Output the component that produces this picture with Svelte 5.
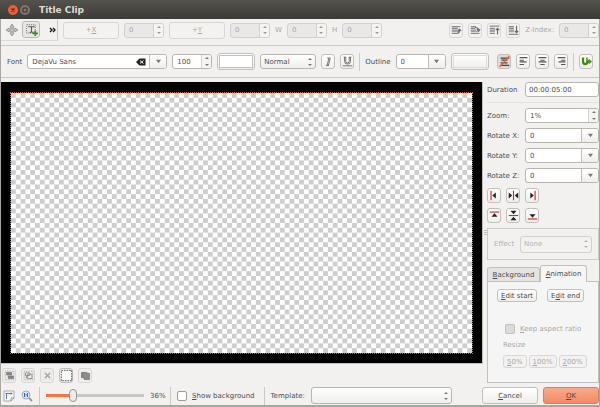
<script>
let font = $state('DejaVu Sans');
let zoom = $state(36);
let keepAspect = $state(false);
let showBackground = $state(false);
let tab = $state('animation');
let duration = $state('00:00:05:00');
let style = $state('Normal');
let outline = $state('0');
let rotations = $state([
    { axis: 'X', value: '0' },
    { axis: 'Y', value: '0' },
    { axis: 'Z', value: '0' }
]);
// position of the handle along the track
let filled = $derived(Math.round(zoom * 0.72));

const hAligns = [
    { label: 'Align left', lines: 'M3.500 2v11', arrows: 'M5 7.500l4-3.500v7z' },
    { label: 'Center horizontally', lines: 'M7.500 2v11', arrows: 'M2 4l4 3.500-4 3.500zM13 4l-4 3.500 4 3.500z' },
    { label: 'Align right', lines: 'M10.500 2v11', arrows: 'M5 4l4 3.500-4 3.500z' }
];
const vAligns = [
    { label: 'Align top', lines: 'M2 3.500h11', arrows: 'M7.500 5l3.500 4h-7z' },
    { label: 'Center vertically', lines: 'M2 7.500h11', arrows: 'M4 2h7l-3.500 4zM7.500 9l3.500 4h-7z' },
    { label: 'Align bottom', lines: 'M2 11.500h11', arrows: 'M4 6h7l-3.500 4z' }
];
const orders = [
    { label: 'Raise', path: 'M2 3h10M2 5h7M2 7h7M2 9h9M2 11h6', arrow: 'M8 11q3 0 3-4M9 8l2-2 2 2' },
    { label: 'Lower', path: 'M2 3h6M2 5h5M2 7h6M2 9h10M2 11h10', arrow: 'M7 4q4 0 4 3M9 6l2 2 2-2' },
    { label: 'Raise to top', path: 'M2 2.500h11M2 5h6M2 7h6M2 9h6M2 11h6', arrow: 'M11 12v-7M9 7l2-2 2 2' },
    { label: 'Lower to bottom', path: 'M2 3h6M2 5h6M2 7h6M2 9h6M2 12h11', arrow: 'M11 2v7M9 8l2 2 2-2' }
];
const textAligns = [
    { label: 'Left', path: 'M3 3h9M3 6h5M3 8h8M3 11h5' },
    { label: 'Center', path: 'M3 3h9M5 6h5M3 8h9M5 11h5' },
    { label: 'Right', path: 'M3 3h9M7 6h5M4 8h8M7 11h5' }
];
</script>

{#snippet spin(label, value, disabled)}
<span class="spin" class:off={disabled}>
    <input type="text" aria-label={label} {value} {disabled}>
    <span class="steps">
        <button type="button" aria-label="Increase {label}" {disabled}><svg viewBox="0 0 6 4"><path d="M1 3l2-2 2 2z"/></svg></button>
        <button type="button" aria-label="Decrease {label}" {disabled}><svg viewBox="0 0 6 4"><path d="M1 1l2 2 2-2z"/></svg></button>
    </span>
</span>
{/snippet}

{#snippet arrow(label)}
<button type="button" class="drop" aria-label={label}><svg viewBox="0 0 8 6"><path d="M1 1h6l-3 4z"/></svg></button>
{/snippet}

{#snippet updown()}
<svg class="updown" viewBox="0 0 6 12"><path d="M1 4l2-2 2 2zM1 8l2 2 2-2z"/></svg>
{/snippet}

{#snippet aligners(list)}
<div class="aligners">
    {#each list as item}
    <button type="button" class="tool" aria-label={item.label}>
        <svg viewBox="0 0 15 15"><path d={item.arrows} fill="#222"/><path d={item.lines} stroke="#d8242a" stroke-width="1.300"/></svg>
    </button>
    {/each}
</div>
{/snippet}

<div class="window">
    <header>
        <button type="button" class="ctl close" aria-label="Close"><svg viewBox="0 0 10 10"><path d="M3.500 3.500l3 3M6.500 3.500l-3 3" stroke="#5c2414" stroke-width="1.300"/></svg></button>
        <button type="button" class="ctl" aria-label="Maximize"><svg viewBox="0 0 10 10"><path d="M3 3h4v4h-4z" fill="none" stroke="#34332e"/></svg></button>
        <h1>Title Clip</h1>
    </header>

    <div class="bar position">
        <div class="modes">
            <button type="button" class="flat" aria-label="Move">
                <svg viewBox="0 0 12 12"><path d="M6 0l2 3h-1v2h2v-1l3 2-3 2v-1h-2v2h1l-2 3-2-3h1v-2h-2v1l-3-2 3-2v1h2v-2h-1z" fill="#c4c4c4" stroke="#777" stroke-width=".6"/></svg>
            </button>
            <button type="button" class="tool text-tool" aria-label="Add text">
                <svg viewBox="0 0 12 12"><path d="M1.500 1.500h8v8h-8z" fill="none" stroke="#888" stroke-dasharray="1 1"/><path d="M3 3.500h6M6 3.500v5M4 8.500h4" stroke="#555" fill="none"/><path d="M9.500 7v5M7 9.500h5" stroke="#2a9a20" stroke-width="1.600"/></svg>
            </button>
            <button type="button" class="more" aria-label="More tools"><svg viewBox="0 0 6 6"><path d="M.5 1l2 2-2 2M3.500 1l2 2-2 2" fill="none" stroke="#111" stroke-width="1.300"/></svg></button>
        </div>
        <button type="button" class="axis" disabled><span>+<u>X</u></span></button>
        {@render spin('X', '0', true)}
        <button type="button" class="axis" disabled><span>+<u>Y</u></span></button>
        {@render spin('Y', '0', true)}
        <span class="dim">W</span>
        {@render spin('W', '0', true)}
        <span class="dim">H</span>
        {@render spin('H', '0', true)}
        <div class="order">
            {#each orders as item}
            <button type="button" class="tool" disabled aria-label={item.label}>
                <svg viewBox="0 0 15 15"><path d={item.path} stroke="#8a8a8a" stroke-width="1.300"/><path d={item.arrow} fill="none" stroke="#666" stroke-width="1.300"/></svg>
            </button>
            {/each}
            <span class="dim">Z-Index:</span>
            {@render spin('Z-Index', '0', true)}
        </div>
    </div>

    <div class="bar fonts">
        <label for="font">Font</label>
        <span class="combo font">
            <input id="font" type="text" bind:value={font}>
            <button type="button" class="clear" aria-label="Clear font" onclick={() => font = ''}>
                <svg viewBox="0 0 10 8"><path d="M0 4l3.500-3.500h6v7h-6z" fill="#222"/><path d="M4 2.500l3.500 3M7.500 2.500l-3.500 3" stroke="#fff"/></svg>
            </button>
            {@render arrow('Choose font')}
        </span>
        {@render spin('Font size', '100', false)}
        <button type="button" class="swatch white" aria-label="Font color"><span></span></button>
        <span class="select weight">
            <select aria-label="Font weight" bind:value={style}>
                <option>Normal</option>
                <option>Bold</option>
            </select>
            {@render updown()}
        </span>
        <button type="button" class="tool" aria-label="Italic">
            <svg viewBox="0 0 15 15"><path d="M6 3.500h3.500M4.500 12h3.500M8 3.500l-2 8.500M9.500 3.500l-2 8.500" fill="none" stroke="#555" stroke-width=".9"/></svg>
        </button>
        <button type="button" class="tool" aria-label="Underline">
            <svg viewBox="0 0 15 15"><path d="M3 2.500h3M9 2.500h3M4 2.500v5q0 3 3.500 3t3.500-3v-5M5.500 2.500v5q0 1.500 2 1.500t2-1.500v-5M2 12.500h11" fill="none" stroke="#555" stroke-width=".9"/></svg>
        </button>
        <span class="rule"></span>
        <label for="outline">Outline</label>
        <span class="combo outline">
            <input id="outline" type="text" bind:value={outline}>
            {@render arrow('Outline width')}
        </span>
        <button type="button" class="swatch" aria-label="Outline color"><span></span></button>
        <div class="aligns">
            <button type="button" class="tool pressed" aria-label="No alignment">
                <svg viewBox="0 0 15 15"><path d="M3 3.500h10M4 6h7M3 9h8M3 12h10" stroke="#444" stroke-width="1.400"/><path d="M2 13.500l11-12" stroke="#e4623a" stroke-width="1.800"/></svg>
            </button>
            {#each textAligns as item}
            <button type="button" class="tool" aria-label={item.label}>
                <svg viewBox="0 0 15 15"><path d={item.path} stroke="#555" stroke-width="1.300"/></svg>
            </button>
            {/each}
            <span class="rule"></span>
            <button type="button" class="tool" aria-label="Insert unicode character">
                <svg viewBox="0 0 15 15"><path d="M3.500 3v4.500q0 3 2.500 3t2.500-3h3" fill="none" stroke="#3f8a12" stroke-width="2.600"/><path d="M8 3v4" stroke="#59a526" stroke-width="2"/><path d="M10 4l4 3.500-4 3.500z" fill="#4b9a18"/></svg>
            </button>
        </div>
    </div>

    <div class="main">
        <section class="left">
            <div class="stage">
                <svg class="scene" viewBox="0 0 48 27" preserveAspectRatio="none" role="img" aria-label="Title preview">
                    <defs>
                        <pattern id="checks" width="1" height="1" patternUnits="userSpaceOnUse">
                            <path d="M0 0h1v1h-1z" fill="#fff"/>
                            <path d="M0 0h.5v.5h-.5zM.5 .5h.5v.5h-.5z" fill="#cdcdcd"/>
                        </pattern>
                    </defs>
                    <rect width="48" height="27" fill="url(#checks)"/>
                </svg>
            </div>
            <div class="select-tools">
                <button type="button" class="tool faded" aria-label="Select all">
                    <svg viewBox="0 0 15 15"><path d="M2.500 2.500h10v10h-10z" fill="none" stroke="#999" stroke-dasharray="1 1"/><path d="M4 4h6v3h-6zM6 8h6v3h-6z" fill="#888" stroke="#666" stroke-width=".6"/></svg>
                </button>
                <button type="button" class="tool faded" aria-label="Select texts">
                    <svg viewBox="0 0 15 15"><path d="M2.500 2.500h10v10h-10z" fill="none" stroke="#999" stroke-dasharray="1 1"/><path d="M4 4.500h5v3h-5zM6.500 6h5v5h-5zM5 8v3" fill="none" stroke="#888"/></svg>
                </button>
                <button type="button" class="tool faded" aria-label="Deselect">
                    <svg viewBox="0 0 15 15"><path d="M2.500 2.500h10v10h-10z" fill="none" stroke="#ddd" stroke-dasharray="1 1"/><path d="M4.500 4.500l6 6M10.500 4.500l-6 6" stroke="#aaa" stroke-width="1.800"/></svg>
                </button>
                <button type="button" class="tool" aria-label="Select rectangles">
                    <svg viewBox="0 0 15 15"><path d="M1.500 1.500h12v12h-12z" fill="#f8fbf8" stroke="#444" stroke-dasharray="2 1"/></svg>
                </button>
                <button type="button" class="tool faded" aria-label="Select images">
                    <svg viewBox="0 0 15 15"><path d="M3 4h6v1h3v7h-6v-2h-3z" fill="#888" stroke="#777"/><circle cx="9" cy="8" r="3" fill="#8e8e8e"/></svg>
                </button>
            </div>
        </section>

        <div class="splitter"><svg viewBox="0 0 4 6"><path d="M1 .5h3M1 2.500h3M1 4.500h3" stroke="#c3bfba"/></svg></div>

        <aside>
            <div class="field duration">
                <label for="duration">Duration</label>
                <input id="duration" class="box" type="text" bind:value={duration}>
            </div>
            <div class="field">
                <span>Zoom:</span>
                {@render spin('Zoom', '1%', false)}
            </div>
            {#each rotations as r}
            <div class="field">
                <label for="rotate-{r.axis}">Rotate {r.axis}:</label>
                <span class="combo">
                    <input id="rotate-{r.axis}" type="text" bind:value={r.value}>
                    {@render arrow('Rotate ' + r.axis + ' slider')}
                </span>
            </div>
            {/each}
            {@render aligners(hAligns)}
            {@render aligners(vAligns)}
            <div class="effect">
                <label for="effect">Effect</label>
                <span class="select off">
                    <select id="effect" disabled><option>None</option></select>
                    {@render updown()}
                </span>
            </div>
            <div class="tabs" role="tablist">
                <button type="button" role="tab" aria-selected={tab == 'background'} class:active={tab == 'background'} onclick={() => tab = 'background'}><span><u>B</u>ackground</span></button>
                <button type="button" role="tab" aria-selected={tab == 'animation'} class:active={tab == 'animation'} onclick={() => tab = 'animation'}><span><u>A</u>nimation</span></button>
            </div>
            <div class="pane">
                {#if tab == 'animation'}
                <div class="edits">
                    <button type="button" class="small"><span><u>E</u>dit start</span></button>
                    <button type="button" class="small"><span>E<u>d</u>it end</span></button>
                </div>
                <label class="check off"><input type="checkbox" disabled bind:checked={keepAspect}><span><u>K</u>eep aspect ratio</span></label>
                <div class="resize">Resize</div>
                <div class="sizes">
                    <button type="button" class="small" disabled><span><u>5</u>0%</span></button>
                    <button type="button" class="small" disabled><span><u>1</u>00%</span></button>
                    <button type="button" class="small" disabled><span><u>2</u>00%</span></button>
                </div>
                {/if}
            </div>
        </aside>
    </div>

    <footer>
        <button type="button" class="flat" aria-label="Fit zoom">
            <svg viewBox="0 0 12 12"><path d="M1 1h10v7l-3 3h-7z" fill="#fbfbfb" stroke="#999" stroke-width=".8"/><path d="M8 11v-3h3" fill="none" stroke="#888" stroke-width=".8"/><path d="M3.500 3v6M2.500 4l1-1 1 1M4 3.500h5M8 2.500l1 1-1 1" fill="none" stroke="#3a6fb5" stroke-width=".9"/></svg>
        </button>
        <button type="button" class="flat" aria-label="Original size">
            <svg viewBox="0 0 12 12"><circle cx="5" cy="5" r="4" fill="#dde8f5" stroke="#9aabc0"/><path d="M8 8l3 3" stroke="#999" stroke-width="1.800"/><path d="M3.500 3v4M6.500 3v4M5 4v.8M5 5.500v.8" stroke="#3465a4"/></svg>
        </button>
        <span class="rule"></span>
        <input class="slider" type="range" min="0" max="100" aria-label="Zoom level" value={filled} oninput={(e) => zoom = Math.round(e.currentTarget.value / 0.72)} style="--filled: {filled}%">
        <span class="percent">{zoom}%</span>
        <span class="rule"></span>
        <label class="check"><input type="checkbox" bind:checked={showBackground}><span><u>S</u>how background</span></label>
        <span class="rule"></span>
        <label for="template">Template:</label>
        <span class="select template">
            <select id="template"><option></option></select>
            {@render updown()}
        </span>
        <div class="actions">
            <button type="button" class="push"><span><u>C</u>ancel</span></button>
            <button type="button" class="push ok"><span><u>O</u>K</span></button>
        </div>
    </footer>
</div>

<style>
:global(body){
    margin: 0;
    background: #3c3b37;
}
*{
    box-sizing: border-box;
}
.window{
    min-height: 100vh;
    display: flex;
    flex-direction: column;
    font: 7px/10px "DejaVu Sans", sans-serif;
    color: #4c4c4c;
    background: #f2f1f0;
    border: 1px solid #a9a59f;
    border-top: 0;
    border-bottom-width: 2px;
}
button, input, select{
    font: inherit;
    color: inherit;
    margin: 0;
    padding: 0;
    min-width: 0;
}
button{
    display: flex;
    align-items: center;
    justify-content: center;
    border: 1px solid #c3bfba;
    border-radius: 3px;
    background: linear-gradient(#fff, #efeeed);
}
button:disabled{
    color: #aaa7a3;
    border-color: #d9d6d3;
    background: #f3f2f1;
}
svg{
    display: block;
}
header{
    height: 19px;
    margin: 0 -1px;
    padding-left: 8px;
    display: flex;
    align-items: center;
    gap: 2px;
    background: linear-gradient(#53524c, #3c3b37);
}
h1{
    margin: 0 0 0 7px;
    font: bold 9px/12px "DejaVu Sans", sans-serif;
    color: #dfdbd2;
}
.ctl{
    width: 10px;
    height: 10px;
    border: 0;
    border-radius: 50%;
    background: #7a776d;
}
.ctl svg{
    width: 10px;
    height: 10px;
}
.close{
    background: #ec5f35;
}
.bar{
    display: flex;
    align-items: center;
    gap: 5px;
    border-bottom: 1px solid #cdc9c5;
}
.position{
    height: 27px;
    padding-bottom: 4px;
}
.modes{
    display: flex;
    align-items: center;
    width: 57px;
    height: 22px;
    padding: 0 1px 0 5px;
    gap: 4px;
    border-right: 1px solid #cdc9c5;
    border-bottom: 1px solid #dcd9d6;
}
.flat, .more{
    border: 0;
    background: none;
}
.flat svg{
    width: 12px;
    height: 12px;
}
.more{
    margin-left: auto;
}
.more svg{
    width: 7px;
    height: 6px;
}
.tool{
    width: 14px;
    height: 15px;
    flex: none;
}
.tool svg{
    width: 13px;
    height: 13px;
    flex: none;
}
.text-tool{
    width: 18px;
    height: 17px;
    border-color: #bbb7b2;
    background: #e9e7e5;
}
.pressed{
    background: #dddad7;
}
.axis{
    width: 56px;
    height: 17px;
}
.spin, .combo{
    display: flex;
    width: 40px;
    height: 15px;
    border: 1px solid #b9b5b0;
    border-radius: 3px;
    background: #fff;
    overflow: hidden;
}
.spin input, .combo input{
    flex: 1;
    width: 0;
    padding-left: 4px;
    border: 0;
    background: none;
}
.spin.off{
    color: #aaa7a3;
    border-color: #d3d0cd;
    background: #e9e8e7;
}
.steps{
    width: 10px;
    display: flex;
    flex-direction: column;
    border-left: 1px solid #d3d0cd;
    background: #f5f4f3;
}
.steps button{
    flex: 1;
    border: 0;
    border-radius: 0;
    background: none;
}
.steps svg{
    width: 6px;
    height: 4px;
    fill: #777;
}
.off .steps svg{
    fill: #999;
}
.dim{
    color: #aaa7a3;
}
.order, .aligns{
    display: flex;
    align-items: center;
    gap: 5px;
    margin-left: auto;
}
.fonts{
    height: 32px;
    padding: 0 6px;
}
.combo.font{
    width: 140px;
}
.combo.outline{
    width: 50px;
}
.drop{
    width: 17px;
    border-width: 0 0 0 1px;
    border-radius: 0;
}
.drop svg{
    width: 7px;
    height: 5px;
    fill: #777;
}
.clear{
    width: 16px;
    border: 0;
    background: none;
}
.clear svg{
    width: 10px;
    height: 8px;
}
.swatch{
    width: 38px;
    height: 17px;
    padding: 1px;
}
.swatch span{
    width: 100%;
    height: 100%;
    border: 1px solid #dddad7;
}
.swatch.white span{
    background: #fff;
    border-color: #c3bfba;
}
.select{
    display: grid;
    align-items: center;
    height: 15px;
}
.select select{
    grid-area: 1 / 1;
    width: 100%;
    height: 100%;
    padding-left: 3px;
    appearance: none;
    border: 1px solid #b9b5b0;
    border-radius: 3px;
    background: linear-gradient(#fff, #efeeed);
}
.updown{
    grid-area: 1 / 1;
    justify-self: end;
    width: 6px;
    height: 12px;
    margin-right: 3px;
    fill: #777;
    pointer-events: none;
}
.weight{
    width: 56px;
}
.select.off select{
    opacity: 1;
    color: #b5b2ae;
    border-color: #d3d0cd;
    background: #f3f2f1;
}
.select.off .updown{
    fill: #b5b2ae;
}
.rule{
    width: 1px;
    height: 18px;
    background: #cdc9c5;
}
.main{
    flex: 1;
    display: flex;
    padding-top: 4px;
}
.left{
    flex: 1;
    display: flex;
    flex-direction: column;
}
.stage{
    flex: 1;
    display: grid;
    padding: 10px 9px 9px;
    background: #000;
    border-bottom: 1px solid #c3bfba;
    border-right: 1px solid #c3bfba;
}
.scene{
    width: 100%;
    height: 100%;
    min-height: 0;
    border: 1px dotted #e05a3a;
    contain: size;
}
.select-tools{
    display: flex;
    gap: 5px;
    padding: 4px 1px 0;
}
.splitter{
    width: 4px;
    display: flex;
    align-items: center;
}
.splitter svg{
    width: 4px;
    height: 6px;
}
.faded{
    border-color: #d9d6d3;
    background: #f0efee;
}
aside{
    width: 112px;
    display: flex;
    flex-direction: column;
    gap: 5px;
}
.field{
    display: grid;
    grid-template-columns: 38px 1fr;
    align-items: center;
}
.field .spin, .field .combo{
    width: 100%;
}
.duration{
    padding-bottom: 5px;
    border-bottom: 1px solid #e4e2e0;
}
.box{
    height: 15px;
    padding-left: 3px;
    border: 1px solid #b9b5b0;
    border-radius: 3px;
    background: #fff;
}
.aligners{
    display: flex;
    gap: 5px;
}
.effect{
    display: grid;
    grid-template-columns: 26px 1fr;
    align-items: center;
    padding: 6px;
    height: 32px;
    border: 1px solid #cdc9c5;
    color: #b5b2ae;
}
.effect .select{
    height: 17px;
}
.tabs{
    display: flex;
    align-items: end;
}
.tabs button{
    width: 53px;
    height: 14px;
    border-radius: 3px 3px 0 0;
    border-bottom: 0;
    background: #e6e4e2;
}
.tabs .active{
    width: 47px;
    height: 17px;
    margin-bottom: -1px;
    background: #f6f5f5;
    z-index: 1;
}
.pane{
    flex: 1;
    margin-top: -5px;
    padding: 7px 9px;
    background: #f6f5f5;
    border: 1px solid #c3bfba;
}
.edits{
    display: flex;
    gap: 10px;
    margin-bottom: 22px;
}
.small{
    height: 13px;
    padding: 0 3px;
}
.check{
    display: flex;
    align-items: center;
    gap: 5px;
}
.check input{
    appearance: none;
    width: 10px;
    height: 10px;
    border: 1px solid #9f9b96;
    border-radius: 2px;
    background: #fff;
}
.check input:checked{
    background: #f07746;
}
.pane .check{
    padding-left: 8px;
    color: #aaa7a3;
}
.pane .check input{
    border-color: #c3bfba;
    background: #dddbd9;
}
.resize{
    margin: 6px 0 5px 6px;
    color: #aaa7a3;
}
.sizes{
    display: flex;
    gap: 2px;
    margin-left: 6px;
}
footer{
    display: flex;
    align-items: center;
    gap: 6px;
    height: 19px;
    margin-top: 3px;
    padding-left: 2px;
}
footer .check{
    margin-right: 3px;
}
.slider{
    appearance: none;
    width: 98px;
    height: 14px;
    background: linear-gradient(to right, #f07746 var(--filled), #c9c6c3 0) center / 100% 3px no-repeat;
}
.slider::-webkit-slider-thumb{
    appearance: none;
    width: 8px;
    height: 13px;
    border: 1px solid #99958f;
    border-radius: 4px;
    background: #eeedec;
}
.percent{
    width: 14px;
}
.template{
    width: 141px;
    height: 17px;
}
.actions{
    display: flex;
    gap: 5px;
    margin-left: auto;
}
.push{
    width: 56px;
    height: 17px;
}
.ok{
    border-color: #c98468;
    background: linear-gradient(#fba98c, #f58a66);
}
</style>
